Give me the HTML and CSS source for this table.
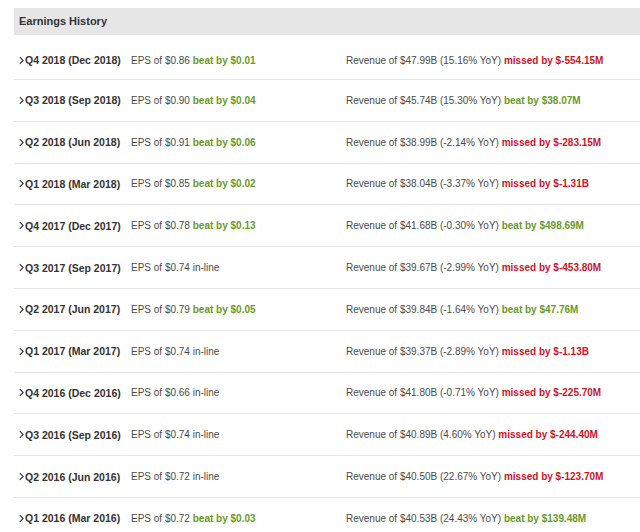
FILE: index.html
```html
<!DOCTYPE html>
<html>
<head>
<meta charset="utf-8">
<link rel="stylesheet" href="styles.css">
</head>
<body>
<div class="panel">
  <div class="header">Earnings History</div>
  <div class="rows">
    <div class="row first">
      <div class="period"><svg class="chev" viewBox="0 0 6 10" width="5" height="9"><path d="M1 1 L5 5 L1 9" fill="none" stroke="#333" stroke-width="1.3"/></svg>Q4 2018 (Dec 2018)</div>
      <div class="eps">EPS of $0.86 <span class="beat">beat by $0.01</span></div>
      <div class="rev">Revenue of $47.99B (15.16% YoY) <span class="miss">missed by $-554.15M</span></div>
    </div>
    <div class="row">
      <div class="period"><svg class="chev" viewBox="0 0 6 10" width="5" height="9"><path d="M1 1 L5 5 L1 9" fill="none" stroke="#333" stroke-width="1.3"/></svg>Q3 2018 (Sep 2018)</div>
      <div class="eps">EPS of $0.90 <span class="beat">beat by $0.04</span></div>
      <div class="rev">Revenue of $45.74B (15.30% YoY) <span class="beat">beat by $38.07M</span></div>
    </div>
    <div class="row">
      <div class="period"><svg class="chev" viewBox="0 0 6 10" width="5" height="9"><path d="M1 1 L5 5 L1 9" fill="none" stroke="#333" stroke-width="1.3"/></svg>Q2 2018 (Jun 2018)</div>
      <div class="eps">EPS of $0.91 <span class="beat">beat by $0.06</span></div>
      <div class="rev">Revenue of $38.99B (-2.14% YoY) <span class="miss">missed by $-283.15M</span></div>
    </div>
    <div class="row">
      <div class="period"><svg class="chev" viewBox="0 0 6 10" width="5" height="9"><path d="M1 1 L5 5 L1 9" fill="none" stroke="#333" stroke-width="1.3"/></svg>Q1 2018 (Mar 2018)</div>
      <div class="eps">EPS of $0.85 <span class="beat">beat by $0.02</span></div>
      <div class="rev">Revenue of $38.04B (-3.37% YoY) <span class="miss">missed by $-1.31B</span></div>
    </div>
    <div class="row">
      <div class="period"><svg class="chev" viewBox="0 0 6 10" width="5" height="9"><path d="M1 1 L5 5 L1 9" fill="none" stroke="#333" stroke-width="1.3"/></svg>Q4 2017 (Dec 2017)</div>
      <div class="eps">EPS of $0.78 <span class="beat">beat by $0.13</span></div>
      <div class="rev">Revenue of $41.68B (-0.30% YoY) <span class="beat">beat by $498.69M</span></div>
    </div>
    <div class="row">
      <div class="period"><svg class="chev" viewBox="0 0 6 10" width="5" height="9"><path d="M1 1 L5 5 L1 9" fill="none" stroke="#333" stroke-width="1.3"/></svg>Q3 2017 (Sep 2017)</div>
      <div class="eps">EPS of $0.74 in-line</div>
      <div class="rev">Revenue of $39.67B (-2.99% YoY) <span class="miss">missed by $-453.80M</span></div>
    </div>
    <div class="row">
      <div class="period"><svg class="chev" viewBox="0 0 6 10" width="5" height="9"><path d="M1 1 L5 5 L1 9" fill="none" stroke="#333" stroke-width="1.3"/></svg>Q2 2017 (Jun 2017)</div>
      <div class="eps">EPS of $0.79 <span class="beat">beat by $0.05</span></div>
      <div class="rev">Revenue of $39.84B (-1.64% YoY) <span class="beat">beat by $47.76M</span></div>
    </div>
    <div class="row">
      <div class="period"><svg class="chev" viewBox="0 0 6 10" width="5" height="9"><path d="M1 1 L5 5 L1 9" fill="none" stroke="#333" stroke-width="1.3"/></svg>Q1 2017 (Mar 2017)</div>
      <div class="eps">EPS of $0.74 in-line</div>
      <div class="rev">Revenue of $39.37B (-2.89% YoY) <span class="miss">missed by $-1.13B</span></div>
    </div>
    <div class="row">
      <div class="period"><svg class="chev" viewBox="0 0 6 10" width="5" height="9"><path d="M1 1 L5 5 L1 9" fill="none" stroke="#333" stroke-width="1.3"/></svg>Q4 2016 (Dec 2016)</div>
      <div class="eps">EPS of $0.66 in-line</div>
      <div class="rev">Revenue of $41.80B (-0.71% YoY) <span class="miss">missed by $-225.70M</span></div>
    </div>
    <div class="row">
      <div class="period"><svg class="chev" viewBox="0 0 6 10" width="5" height="9"><path d="M1 1 L5 5 L1 9" fill="none" stroke="#333" stroke-width="1.3"/></svg>Q3 2016 (Sep 2016)</div>
      <div class="eps">EPS of $0.74 in-line</div>
      <div class="rev">Revenue of $40.89B (4.60% YoY) <span class="miss">missed by $-244.40M</span></div>
    </div>
    <div class="row">
      <div class="period"><svg class="chev" viewBox="0 0 6 10" width="5" height="9"><path d="M1 1 L5 5 L1 9" fill="none" stroke="#333" stroke-width="1.3"/></svg>Q2 2016 (Jun 2016)</div>
      <div class="eps">EPS of $0.72 in-line</div>
      <div class="rev">Revenue of $40.50B (22.67% YoY) <span class="miss">missed by $-123.70M</span></div>
    </div>
    <div class="row">
      <div class="period"><svg class="chev" viewBox="0 0 6 10" width="5" height="9"><path d="M1 1 L5 5 L1 9" fill="none" stroke="#333" stroke-width="1.3"/></svg>Q1 2016 (Mar 2016)</div>
      <div class="eps">EPS of $0.72 <span class="beat">beat by $0.03</span></div>
      <div class="rev">Revenue of $40.53B (24.43% YoY) <span class="beat">beat by $139.48M</span></div>
    </div>
  </div>
</div>
</body>
</html>
```
FILE: styles.css
```css
html, body {
  margin: 0;
  padding: 0;
  background: #fff;
}
body {
  font-family: "Liberation Sans", Arial, sans-serif;
  font-size: 10px;
  color: #4a4a4a;
  overflow: hidden;
}
.panel {
  padding: 8px 0 0 14px;
}
.header {
  background: #e6e6e6;
  height: 27px;
  line-height: 27px;
  padding-left: 5px;
  font-size: 11px;
  font-weight: bold;
  color: #333;
}
.row {
  display: grid;
  grid-template-columns: 112px 215px 1fr;
  align-items: center;
  height: 40.8px;
  border-bottom: 1px solid #e6e6e6;
  padding-left: 5px;
}
.row.first {
  height: 38px;
  padding-top: 6px;
}
.period {
  display: flex;
  align-items: center;
  font-size: 10.5px;
  font-weight: bold;
  color: #333;
  white-space: nowrap;
}
.chev {
  margin-right: 1px;
}
.eps, .rev {
  white-space: nowrap;
}
.beat {
  color: #689a2a;
  font-weight: bold;
}
.miss {
  color: #cc1526;
  font-weight: bold;
}
```
